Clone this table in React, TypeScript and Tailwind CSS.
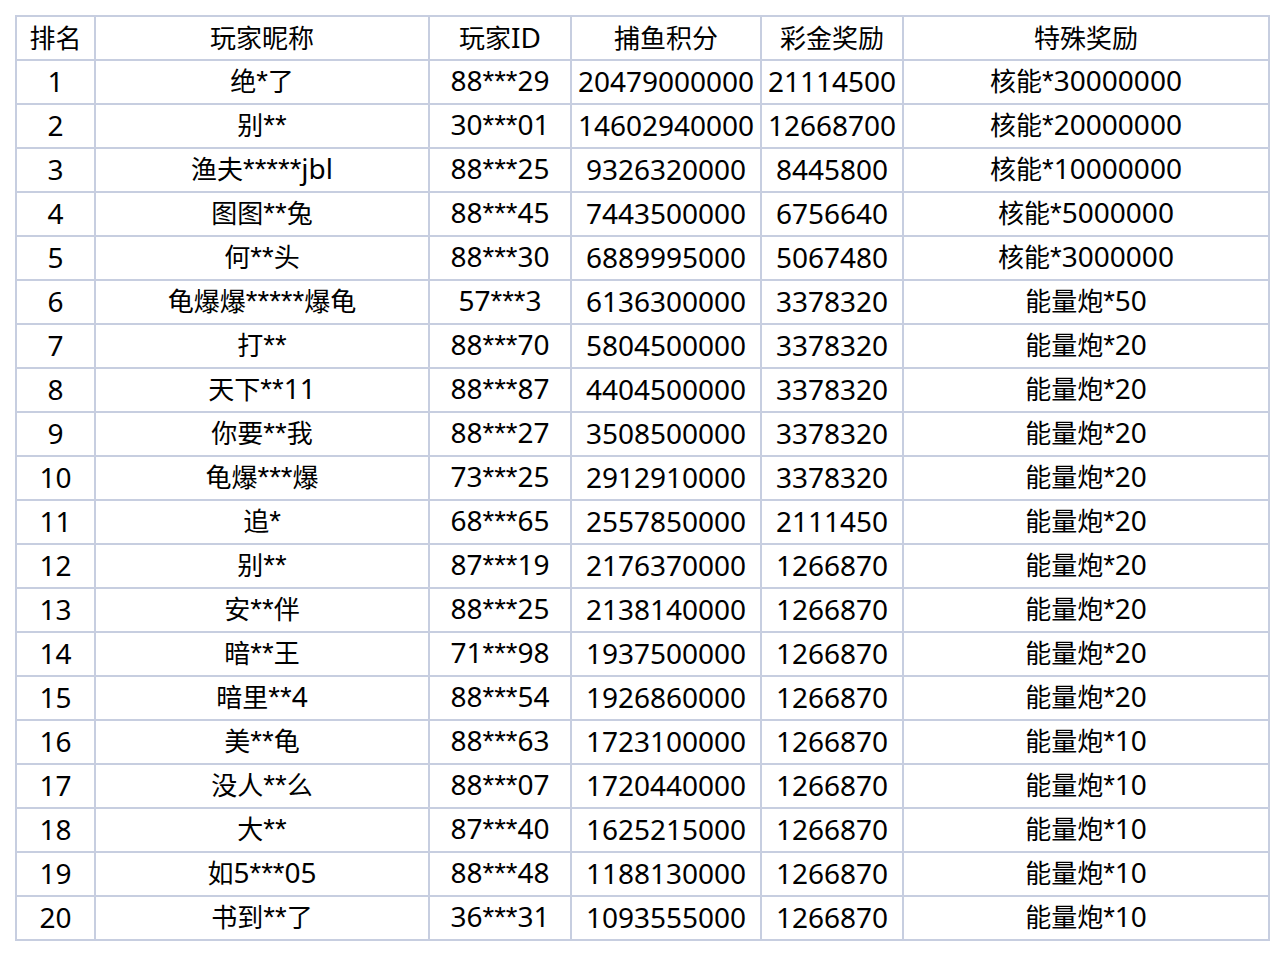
import React from "react";

interface Row {
  rank: number
  name: string
  id: string
  score: string
  bonus: string
  special: string
}

const rows: Row[] = [
  { rank: 1, name: "绝*了", id: "88***29", score: "20479000000", bonus: "21114500", special: "核能*30000000" },
  { rank: 2, name: "别**", id: "30***01", score: "14602940000", bonus: "12668700", special: "核能*20000000" },
  { rank: 3, name: "渔夫*****jbl", id: "88***25", score: "9326320000", bonus: "8445800", special: "核能*10000000" },
  { rank: 4, name: "图图**兔", id: "88***45", score: "7443500000", bonus: "6756640", special: "核能*5000000" },
  { rank: 5, name: "何**头", id: "88***30", score: "6889995000", bonus: "5067480", special: "核能*3000000" },
  { rank: 6, name: "龟爆爆*****爆龟", id: "57***3", score: "6136300000", bonus: "3378320", special: "能量炮*50" },
  { rank: 7, name: "打**", id: "88***70", score: "5804500000", bonus: "3378320", special: "能量炮*20" },
  { rank: 8, name: "天下**11", id: "88***87", score: "4404500000", bonus: "3378320", special: "能量炮*20" },
  { rank: 9, name: "你要**我", id: "88***27", score: "3508500000", bonus: "3378320", special: "能量炮*20" },
  { rank: 10, name: "龟爆***爆", id: "73***25", score: "2912910000", bonus: "3378320", special: "能量炮*20" },
  { rank: 11, name: "追*", id: "68***65", score: "2557850000", bonus: "2111450", special: "能量炮*20" },
  { rank: 12, name: "别**", id: "87***19", score: "2176370000", bonus: "1266870", special: "能量炮*20" },
  { rank: 13, name: "安**伴", id: "88***25", score: "2138140000", bonus: "1266870", special: "能量炮*20" },
  { rank: 14, name: "暗**王", id: "71***98", score: "1937500000", bonus: "1266870", special: "能量炮*20" },
  { rank: 15, name: "暗里**4", id: "88***54", score: "1926860000", bonus: "1266870", special: "能量炮*20" },
  { rank: 16, name: "美**龟", id: "88***63", score: "1723100000", bonus: "1266870", special: "能量炮*10" },
  { rank: 17, name: "没人**么", id: "88***07", score: "1720440000", bonus: "1266870", special: "能量炮*10" },
  { rank: 18, name: "大**", id: "87***40", score: "1625215000", bonus: "1266870", special: "能量炮*10" },
  { rank: 19, name: "如5***05", id: "88***48", score: "1188130000", bonus: "1266870", special: "能量炮*10" },
  { rank: 20, name: "书到**了", id: "36***31", score: "1093555000", bonus: "1266870", special: "能量炮*10" },
]

// CJK runs are a bit smaller than the digits in the original, asterisks are narrow
const Txt: React.FC<{ s: string | number }> = ({ s }) => {
  const parts = String(s).split(/([\u4e00-\u9fff]+|\*+)/).filter(Boolean)
  return (
    <>
      {parts.map((p, i) =>
        /[\u4e00-\u9fff]/.test(p) ? (
          <span key={i} className="text-[26px]">{p}</span>
        ) : p.startsWith("*") ? (
          <span key={i} className="text-[30px]" style={{ fontFamily: '"Liberation Sans", sans-serif' }}>{p}</span>
        ) : (
          <span key={i}>{p}</span>
        )
      )}
    </>
  )
}

const cell = "border-2 border-[#c7cee0] p-0 pb-[3px] h-[44px] text-center align-middle whitespace-nowrap"

const App: React.FC = () => {
  return (
    <div className="bg-white w-[1284px] h-[956px] pt-[15px] pl-[15px]">
      <table
        className="table-fixed border-collapse w-[1253px] text-[28px] leading-none text-black"
        style={{ fontFamily: '"Noto Sans", "Noto Sans CJK SC", sans-serif' }}
      >
        <colgroup>
          <col className="w-[79px]" />
          <col className="w-[334px]" />
          <col className="w-[142px]" />
          <col className="w-[190px]" />
          <col className="w-[142px]" />
          <col className="w-[366px]" />
        </colgroup>
        <thead>
          <tr>
            {["排名", "玩家昵称", "玩家ID", "捕鱼积分", "彩金奖励", "特殊奖励"].map((h) => (
              <th key={h} className={`${cell} font-normal`}><Txt s={h} /></th>
            ))}
          </tr>
        </thead>
        <tbody>
          {rows.map((r) => (
            <tr key={r.rank}>
              <td className={cell}><Txt s={r.rank} /></td>
              <td className={cell}><Txt s={r.name} /></td>
              <td className={cell}><Txt s={r.id} /></td>
              <td className={cell}><Txt s={r.score} /></td>
              <td className={cell}><Txt s={r.bonus} /></td>
              <td className={cell}><Txt s={r.special} /></td>
            </tr>
          ))}
        </tbody>
      </table>
    </div>
  )
}

export default App
